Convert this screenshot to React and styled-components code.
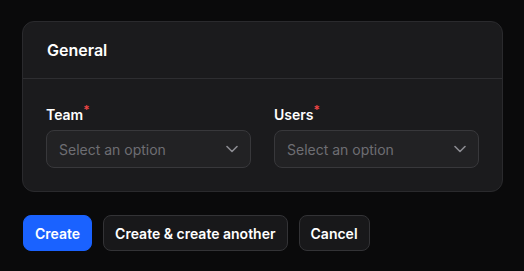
import React from 'react';
import styled, { createGlobalStyle } from 'styled-components';

const GlobalStyle = createGlobalStyle`
  html, body {
    margin: 0;
    padding: 0;
    background: #0a0a0b;
  }
  body {
    font-family: Inter, "Noto Sans", sans-serif;
    color: #fff;
    -webkit-font-smoothing: antialiased;
  }
`;

const Page = styled.div`
  padding: 21px 21px 20px 22px;
  display: flex;
  flex-direction: column;
  gap: 23px;
`;

const Section = styled.section`
  background: #1b1b1d;
  border: 1px solid #2a2a2d;
  border-radius: 12px;
  overflow: hidden;
`;

const SectionHeader = styled.header`
  padding: 16px 24px;
  border-bottom: 1px solid #2e2e31;
  font-size: 16px;
  font-weight: 600;
  line-height: 24px;
`;

const SectionBody = styled.div`
  padding: 24px 23px 23px 23px;
  display: grid;
  grid-template-columns: 1fr 1fr;
  gap: 23px;
`;

const Field = styled.div`
  display: flex;
  flex-direction: column;
  gap: 3px;
`;

const Label = styled.label`
  font-size: 14px;
  font-weight: 600;
  line-height: 24px;
  color: #fff;
`;

const Required = styled.sup`
  color: #ef4444;
  font-size: 12px;
  font-weight: 600;
  margin-left: 0;
  vertical-align: top;
  line-height: 14px;
`;

const Select = styled.div`
  height: 36px;
  border: 1px solid #38383b;
  border-radius: 8px;
  background: #222224;
  display: flex;
  align-items: center;
  justify-content: space-between;
  padding: 0 12px;
  font-size: 14px;
  color: #6e6e73;
`;

const Actions = styled.div`
  display: flex;
  gap: 11px;
  padding-left: 1px;
`;

const Button = styled.button`
  height: 36px;
  padding: 0 11px;
  border-radius: 8px;
  border: 1px solid ${p => (p.$primary ? '#1a62ff' : '#333336')};
  background: ${p => (p.$primary ? '#1a62ff' : '#18181a')};
  color: #fff;
  font-family: inherit;
  font-size: 14px;
  font-weight: 600;
  cursor: pointer;
`;

const Chevron = () => (
  <svg width="12" height="8" viewBox="0 0 12 8" fill="none">
    <path d="M1 1.5l5 5 5-5" stroke="#8b8b91" strokeWidth="1.6" strokeLinecap="round" strokeLinejoin="round" />
  </svg>
);

const SelectField = ({ label }) => (
  <Field>
    <Label>
      {label}
      <Required>*</Required>
    </Label>
    <Select>
      <span>Select an option</span>
      <Chevron />
    </Select>
  </Field>
);

const App = () => {
  return (
    <>
      <GlobalStyle />
      <Page>
        <Section>
          <SectionHeader>General</SectionHeader>
          <SectionBody>
            <SelectField label="Team" />
            <SelectField label="Users" />
          </SectionBody>
        </Section>
        <Actions>
          <Button $primary>Create</Button>
          <Button>Create &amp; create another</Button>
          <Button>Cancel</Button>
        </Actions>
      </Page>
    </>
  );
};

export default App;
